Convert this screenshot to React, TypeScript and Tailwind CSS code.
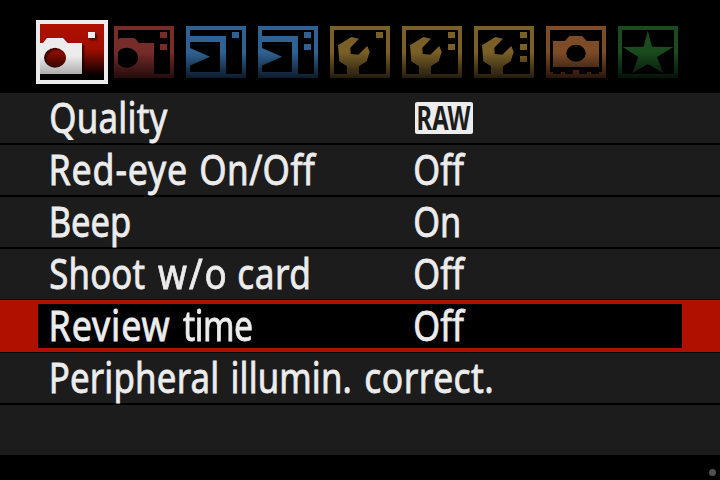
import { useLayoutEffect, useRef, useState, type ReactNode } from "react";
import clsx from "clsx";

type WordSpec = { text: string; width: number; gap?: number; tracked?: boolean };

/** Horizontal condensing that the menu lettering leans towards. */
const CONDENSE = 0.83;

/** One condensed, lightly tracked word whose ink fills `width` pixels. */
function Word({ text, width, gap = 0, tracked = true }: WordSpec) {
  const ref = useRef<HTMLSpanElement>(null);
  const [fit, setFit] = useState({ scale: CONDENSE, tracking: 0, shift: 0 });

  useLayoutEffect(() => {
    const ctx = document.createElement("canvas").getContext("2d");
    if (!ref.current || !ctx) return;
    const cs = getComputedStyle(ref.current);
    ctx.font = `${cs.fontWeight} ${cs.fontSize} ${cs.fontFamily}`;
    const m = ctx.measureText(text);
    const ink = m.actualBoundingBoxLeft + m.actualBoundingBoxRight;
    const natural = width / ink;
    const scale = tracked ? (natural + CONDENSE) / 2 : natural;
    setFit({
      scale,
      tracking: (width / scale - ink) / (text.length - 1),
      shift: m.actualBoundingBoxLeft * scale,
    });
  }, [text, width, tracked]);

  return (
    <span className="block shrink-0" style={{ width, marginLeft: gap }}>
      <span
        ref={ref}
        className="block w-max origin-left whitespace-pre"
        style={{
          letterSpacing: `${fit.tracking}px`,
          transform: `translateX(${fit.shift}px) scaleX(${fit.scale})`,
        }}
      >
        {text}
      </span>
    </span>
  );
}

function Dots({ count }: { count: number }) {
  return (
    <>
      {[6, 18, 30].slice(0, count).map((y) => (
        <rect key={y} x="46" y={y} width="7" height="6" />
      ))}
    </>
  );
}

function Tab({ id, color, dark, children }: { id: string; color: string; dark: string; children: ReactNode }) {
  const paint = `url(#${id})`;
  return (
    <svg width="60" height="52" viewBox="0 0 60 52" className="mt-1.5 block shrink-0" fill={paint}>
      <defs>
        <linearGradient id={id} gradientUnits="userSpaceOnUse" x1="0" y1="0" x2="0" y2="52">
          <stop offset="0.5" stopColor={color} />
          <stop offset="1" stopColor={dark} />
        </linearGradient>
      </defs>
      <path fillRule="evenodd" d="M0 0H60V52H0ZM4 4V48H56V4Z" />
      {children}
    </svg>
  );
}

function ActiveTab() {
  return (
    <svg width="72" height="64" viewBox="0 0 72 64" className="block shrink-0">
      <defs>
        <linearGradient id="activeBg" gradientUnits="userSpaceOnUse" x1="0" y1="4" x2="0" y2="60">
          <stop offset="0" stopColor="#b01000" />
          <stop offset="0.45" stopColor="#a00e00" />
          <stop offset="0.93" stopColor="#000" />
        </linearGradient>
        <linearGradient id="activeBody" gradientUnits="userSpaceOnUse" x1="0" y1="18" x2="0" y2="54">
          <stop offset="0.5" stopColor="#ececec" />
          <stop offset="1" stopColor="#adadad" />
        </linearGradient>
        <filter id="soft" x="-30%" y="-30%" width="180%" height="180%">
          <feDropShadow dx="2" dy="2" stdDeviation="1.3" floodColor="#000" floodOpacity="0.65" />
        </filter>
      </defs>
      <rect width="72" height="64" fill="#ececec" />
      <rect x="4" y="4" width="64" height="56" fill="url(#activeBg)" />
      <g filter="url(#soft)">
        <path
          fill="url(#activeBody)"
          fillRule="evenodd"
          d="M4 23H7L11 18H27L31.5 23H46V54H4ZM19 27.7A11 10 0 1 0 19 47.7A11 10 0 1 0 19 27.7Z"
        />
        <rect x="52" y="12" width="7" height="6" fill="#ececec" />
      </g>
    </svg>
  );
}

function ShootingCamera() {
  return (
    <path
      fillRule="evenodd"
      d="M4 13.5L6 12H20.5L25 17H40V48H4V37.5A11 10 0 0 0 13 41.7A11 10 0 0 0 13 21.7A11 10 0 0 0 4 25.9Z"
    />
  );
}

function Playback() {
  return (
    <>
      <path d="M4 10H40V48H34V16H4Z" />
      <path d="M4 22L24 30.7L4 39.5Z" />
      <rect x="4" y="46" width="36" height="2" />
    </>
  );
}

function Wrench() {
  return (
    <path d="M8 19.3L21.3 11L29 12.7L20.3 21.7L20.7 28L28.3 28.7L37.3 20L39.7 26L36.7 35.3L29 40.3V48H17V40.3L9.3 35.3Z" />
  );
}

const GOLD = { color: "#7a6026", dark: "#241c0e" };
const BLUE = { color: "#2f6293", dark: "#0d1b2a" };

function TabBar() {
  return (
    <header className="flex h-[93px] shrink-0 items-start pl-9 pt-5">
      <ActiveTab />
      <div className="ml-1.5 flex gap-3">
        <Tab id="shoot2" color="#762c28" dark="#230c0c">
          <ShootingCamera />
          <Dots count={2} />
        </Tab>
        <Tab id="play1" {...BLUE}>
          <Playback />
          <Dots count={1} />
        </Tab>
        <Tab id="play2" {...BLUE}>
          <Playback />
          <Dots count={2} />
        </Tab>
        <Tab id="setup1" {...GOLD}>
          <Wrench />
          <Dots count={1} />
        </Tab>
        <Tab id="setup2" {...GOLD}>
          <Wrench />
          <Dots count={2} />
        </Tab>
        <Tab id="setup3" {...GOLD}>
          <Wrench />
          <Dots count={3} />
        </Tab>
        <Tab id="custom" color="#7e4b28" dark="#27150b">
          <path
            fillRule="evenodd"
            d="M7 15H19L23.3 10H36L40.7 15H53V41H7ZM30 18.8A9.7 8.5 0 1 0 30 35.8A9.7 8.5 0 1 0 30 18.8Z"
          />
          <path d="M4 46H7V48H4ZM15 46H19V48H15ZM27 44H33V48H27ZM41 46H45V48H41ZM53 46H56V48H53Z" />
        </Tab>
        <Tab id="mymenu" color="#1b4a1e" dark="#06140a">
          <path d="M29.8 4.7L34 20.7L55.3 21L39 31L45.3 47.3L29.8 38L14.3 47.3L20.3 31L4.7 21L25.6 20.7Z" />
        </Tab>
      </div>
    </header>
  );
}

const OFF: WordSpec = { text: "Off", width: 51 };

const ROWS: { label: WordSpec[]; value?: WordSpec; raw?: boolean; selected?: boolean }[] = [
  { label: [{ text: "Quality", width: 117 }], raw: true },
  {
    label: [
      { text: "Red-eye", width: 134, gap: 1 },
      { text: "On/Off", width: 116, gap: 15 },
    ],
    value: OFF,
  },
  { label: [{ text: "Beep", width: 78, gap: 1 }], value: { text: "On", width: 44 } },
  {
    label: [
      { text: "Shoot", width: 94 },
      { text: "w/o", width: 67, gap: 13 },
      { text: "card", width: 69, gap: 14 },
    ],
    value: OFF,
  },
  {
    label: [
      { text: "Review", width: 118, gap: 1 },
      { text: "time", width: 69, gap: 13 },
    ],
    value: OFF,
    selected: true,
  },
  {
    label: [
      { text: "Peripheral", width: 165, gap: 1 },
      { text: "illumin.", width: 117, gap: 16 },
      { text: "correct.", width: 126, gap: 16 },
    ],
  },
  { label: [] },
];

function RawBadge() {
  return (
    <span className="mt-[9px] flex h-8 w-[58px] justify-center rounded-[2px] bg-[#ececec] text-[33.5px]/[31px] font-bold text-[#1c1c1c]">
      <Word text="RAW" width={53} tracked={false} />
    </span>
  );
}

export default function App() {
  return (
    <div className="flex h-[480px] w-[720px] flex-col overflow-hidden bg-black font-['Noto_Sans','Open_Sans',sans-serif] text-[41.5px]/[48px] text-[#ececec]">
      <TabBar />
      <main className="flex flex-col">
        {ROWS.map((row, i) => (
          <div
            key={i}
            className={clsx(
              "px-[38px]",
              row.selected ? "-mt-px mb-px h-[52px] bg-[#b01000] py-1" : "mb-0.5 h-[50px] bg-[#1c1c1c]",
            )}
          >
            <div className={clsx("flex pl-[13px]", row.selected ? "h-11 bg-black" : "h-[50px]")}>
              <div className={clsx("flex w-[364px] shrink-0 [-webkit-text-stroke:0.8px]", row.selected && "-mt-[3px]")}>
                {row.label.map((w) => (
                  <Word key={w.text} {...w} />
                ))}
              </div>
              <div className={clsx("flex", row.selected && "-mt-[3px]", !row.raw && "[-webkit-text-stroke:0.8px]")}>
                {row.raw && <RawBadge />}
                {row.value && <Word {...row.value} />}
              </div>
            </div>
          </div>
        ))}
      </main>
      <footer className="flex flex-1 items-start justify-end pr-1 pt-3">
        <span className="size-[7px] rounded-full bg-[#505050]" />
      </footer>
    </div>
  );
}
